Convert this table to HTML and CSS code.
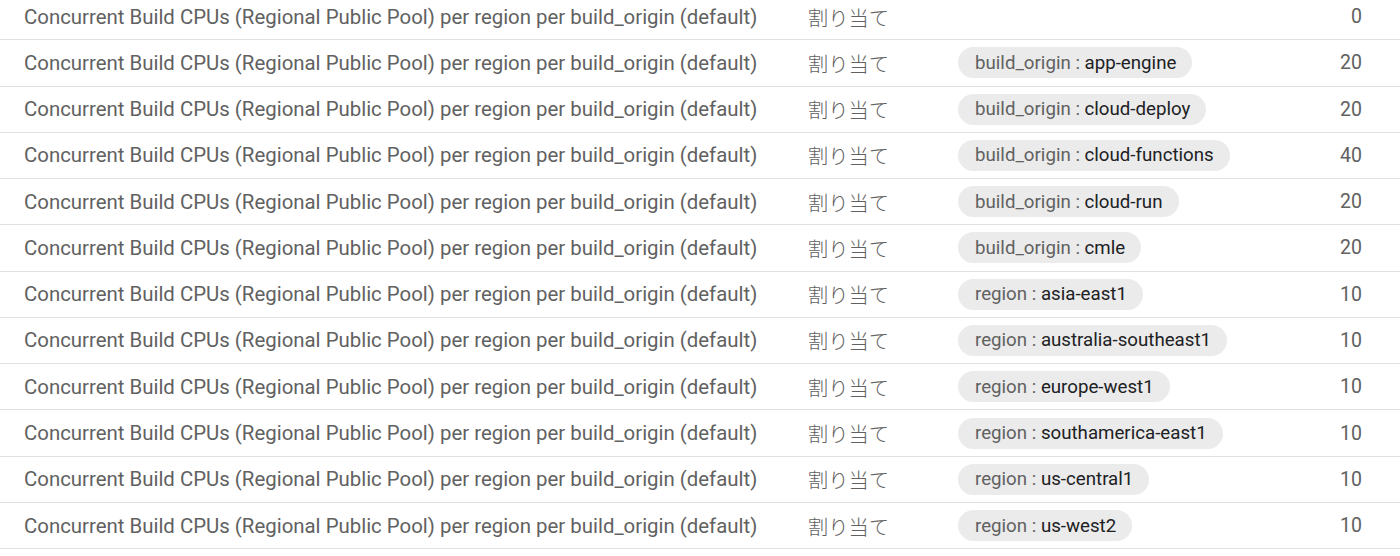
FILE: index.html
```html
<!DOCTYPE html>
<html>
<head>
<meta charset="UTF-8">
<title>quotas</title>
<link rel="stylesheet" href="styles.css">
</head>
<body>
<div class="quota-list">
  <div class="row">
    <span class="name">Concurrent Build CPUs (Regional Public Pool) per region per build_origin (default)</span>
    <span class="kind">割り当て</span>
    <span class="dims"></span>
    <span class="value">0</span>
  </div>
  <div class="row">
    <span class="name">Concurrent Build CPUs (Regional Public Pool) per region per build_origin (default)</span>
    <span class="kind">割り当て</span>
    <span class="dims"><span class="chip"><span class="key">build_origin : </span>app-engine</span></span>
    <span class="value">20</span>
  </div>
  <div class="row">
    <span class="name">Concurrent Build CPUs (Regional Public Pool) per region per build_origin (default)</span>
    <span class="kind">割り当て</span>
    <span class="dims"><span class="chip"><span class="key">build_origin : </span>cloud-deploy</span></span>
    <span class="value">20</span>
  </div>
  <div class="row">
    <span class="name">Concurrent Build CPUs (Regional Public Pool) per region per build_origin (default)</span>
    <span class="kind">割り当て</span>
    <span class="dims"><span class="chip"><span class="key">build_origin : </span>cloud-functions</span></span>
    <span class="value">40</span>
  </div>
  <div class="row">
    <span class="name">Concurrent Build CPUs (Regional Public Pool) per region per build_origin (default)</span>
    <span class="kind">割り当て</span>
    <span class="dims"><span class="chip"><span class="key">build_origin : </span>cloud-run</span></span>
    <span class="value">20</span>
  </div>
  <div class="row">
    <span class="name">Concurrent Build CPUs (Regional Public Pool) per region per build_origin (default)</span>
    <span class="kind">割り当て</span>
    <span class="dims"><span class="chip"><span class="key">build_origin : </span>cmle</span></span>
    <span class="value">20</span>
  </div>
  <div class="row">
    <span class="name">Concurrent Build CPUs (Regional Public Pool) per region per build_origin (default)</span>
    <span class="kind">割り当て</span>
    <span class="dims"><span class="chip"><span class="key">region : </span>asia-east1</span></span>
    <span class="value">10</span>
  </div>
  <div class="row">
    <span class="name">Concurrent Build CPUs (Regional Public Pool) per region per build_origin (default)</span>
    <span class="kind">割り当て</span>
    <span class="dims"><span class="chip"><span class="key">region : </span>australia-southeast1</span></span>
    <span class="value">10</span>
  </div>
  <div class="row">
    <span class="name">Concurrent Build CPUs (Regional Public Pool) per region per build_origin (default)</span>
    <span class="kind">割り当て</span>
    <span class="dims"><span class="chip"><span class="key">region : </span>europe-west1</span></span>
    <span class="value">10</span>
  </div>
  <div class="row">
    <span class="name">Concurrent Build CPUs (Regional Public Pool) per region per build_origin (default)</span>
    <span class="kind">割り当て</span>
    <span class="dims"><span class="chip"><span class="key">region : </span>southamerica-east1</span></span>
    <span class="value">10</span>
  </div>
  <div class="row">
    <span class="name">Concurrent Build CPUs (Regional Public Pool) per region per build_origin (default)</span>
    <span class="kind">割り当て</span>
    <span class="dims"><span class="chip"><span class="key">region : </span>us-central1</span></span>
    <span class="value">10</span>
  </div>
  <div class="row">
    <span class="name">Concurrent Build CPUs (Regional Public Pool) per region per build_origin (default)</span>
    <span class="kind">割り当て</span>
    <span class="dims"><span class="chip"><span class="key">region : </span>us-west2</span></span>
    <span class="value">10</span>
  </div>
</div>
</body>
</html>
```

FILE: styles.css
```css
body {
  margin: 0;
  background-color: #fff;
  font-family: Roboto, "Noto Sans CJK JP", sans-serif;
  overflow: hidden;
}

.quota-list {
  margin-top: -6px;
}

.row {
  display: grid;
  grid-template-columns: 784px 150px 1fr auto;
  align-items: center;
  height: 46.27px;
  box-sizing: border-box;
  padding: 0 38px 0 24px;
  border-bottom: 1px solid #e0e0e0;
  color: #616161;
}

.name {
  white-space: nowrap;
  font-size: 20.4px;
}

.kind {
  font-size: 20.3px;
  font-weight: 300;
}

.chip {
  display: inline-flex;
  align-items: center;
  height: 31px;
  padding: 0 16px 0 17px;
  border-radius: 16px;
  background-color: #ebebeb;
  color: #202124;
  font-size: 18.7px;
}

.key {
  color: #616161;
  white-space: pre;
}

.value {
  text-align: right;
  font-size: 19.5px;
}
```
